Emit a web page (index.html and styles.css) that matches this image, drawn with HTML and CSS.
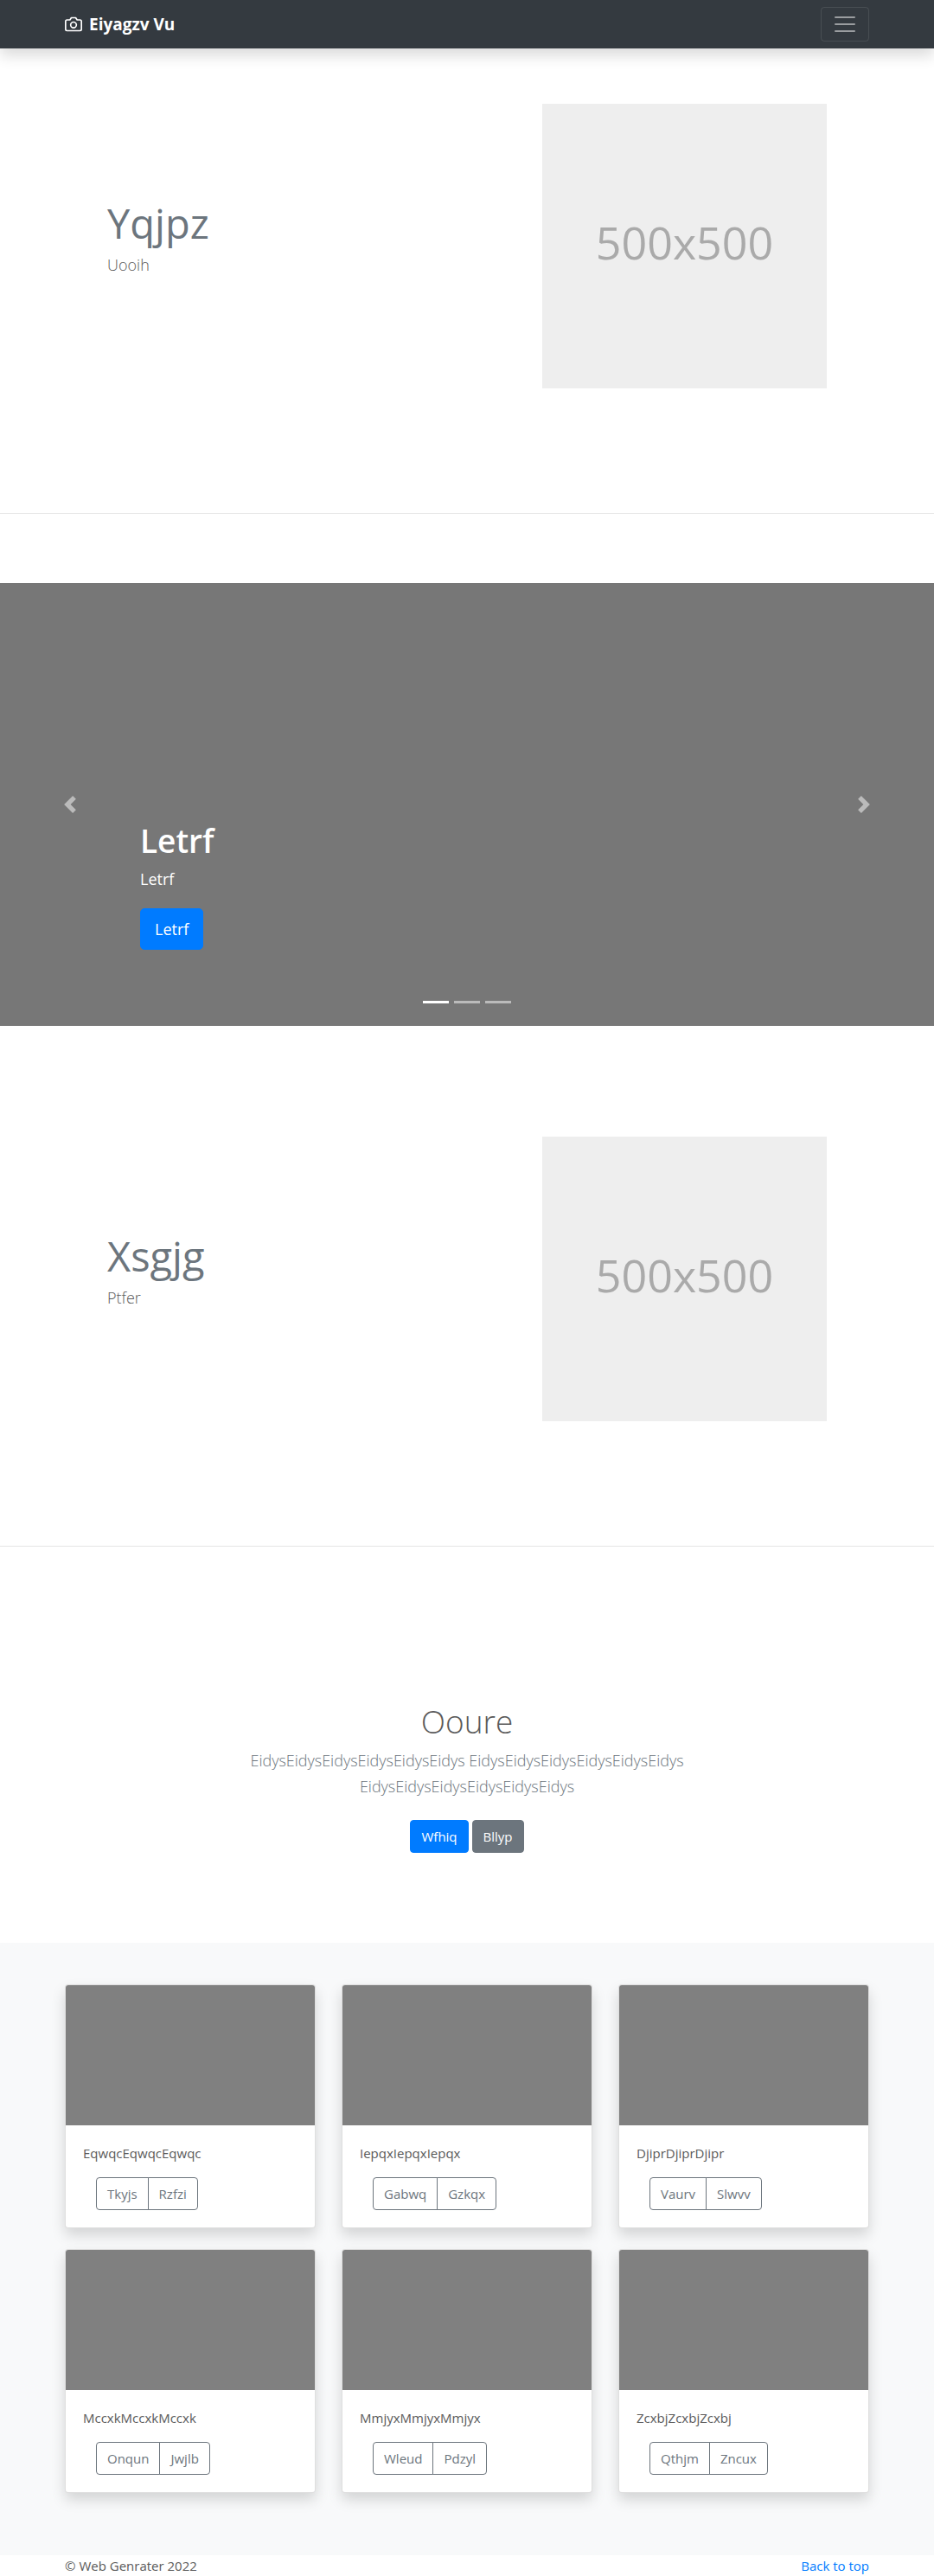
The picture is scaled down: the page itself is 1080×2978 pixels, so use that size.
FILE: index.html
```html
<!DOCTYPE html>
<html lang="en">
<head>
  <meta charset="utf-8">
  <meta name="viewport" content="width=device-width, initial-scale=1">
  <title>Eiyagzv Vu</title>
  <link rel="stylesheet" href="styles.css">
</head>
<body>
  <header class="navbar" id="top">
    <div class="container navbar-inner">
      <a class="brand" href="#">
        <svg class="brand-icon" viewBox="0 0 24 24" fill="none" stroke="currentColor" stroke-width="2" stroke-linecap="round" stroke-linejoin="round" aria-hidden="true">
          <path d="M23 19a2 2 0 0 1-2 2H3a2 2 0 0 1-2-2V8a2 2 0 0 1 2-2h4l2-3h6l2 3h4a2 2 0 0 1 2 2z"/>
          <circle cx="12" cy="13" r="4"/>
        </svg>
        <span>Eiyagzv Vu</span>
      </a>
      <button class="toggler" type="button" aria-label="Toggle navigation">
        <svg class="toggler-icon" viewBox="0 0 30 30" stroke="currentColor" stroke-width="2" stroke-linecap="round" aria-hidden="true">
          <path d="M4 7h22M4 15h22M4 23h22"/>
        </svg>
      </button>
    </div>
  </header>

  <main>
    <section class="container">
      <div class="feature">
        <div class="feature-text">
          <h2 class="feature-title">Yqjpz</h2>
          <p class="lead">Uooih</p>
        </div>
        <div class="placeholder">500x500</div>
      </div>
    </section>
    <hr class="divider">

    <section class="carousel" aria-label="Carousel">
      <div class="carousel-caption">
        <h1 class="carousel-title">Letrf</h1>
        <p class="carousel-text">Letrf</p>
        <a class="btn btn-primary btn-large" href="#">Letrf</a>
      </div>
      <button class="carousel-control carousel-prev" type="button" aria-label="Previous">
        <svg class="carousel-icon" viewBox="0 0 8 8" fill="#fff" aria-hidden="true"><path d="M5.25 0l-4 4 4 4 1.5-1.5L4.25 4l2.5-2.5L5.25 0z"/></svg>
      </button>
      <button class="carousel-control carousel-next" type="button" aria-label="Next">
        <svg class="carousel-icon" viewBox="0 0 8 8" fill="#fff" aria-hidden="true"><path d="M2.75 0l-1.5 1.5L3.75 4l-2.5 2.5L2.75 8l4-4-4-4z"/></svg>
      </button>
      <div class="indicators">
        <button class="indicator active" type="button" aria-label="Slide 1"></button>
        <button class="indicator" type="button" aria-label="Slide 2"></button>
        <button class="indicator" type="button" aria-label="Slide 3"></button>
      </div>
    </section>

    <section class="container">
      <div class="feature">
        <div class="feature-text">
          <h2 class="feature-title">Xsgjg</h2>
          <p class="lead">Ptfer</p>
        </div>
        <div class="placeholder">500x500</div>
      </div>
    </section>
    <hr class="divider">

    <section class="intro">
      <h1 class="intro-title">Ooure</h1>
      <p class="lead intro-lead">EidysEidysEidysEidysEidysEidys EidysEidysEidysEidysEidysEidys EidysEidysEidysEidysEidysEidys</p>
      <div class="intro-actions">
        <a class="btn btn-primary" href="#">Wfhiq</a>
        <a class="btn btn-secondary" href="#">Bllyp</a>
      </div>
    </section>

    <section class="album">
      <div class="container album-grid">
        <article class="card">
          <div class="card-image"></div>
          <div class="card-body">
            <p class="card-text">EqwqcEqwqcEqwqc</p>
            <div class="btn-group">
              <button class="btn btn-outline" type="button">Tkyjs</button>
              <button class="btn btn-outline" type="button">Rzfzi</button>
            </div>
          </div>
        </article>
        <article class="card">
          <div class="card-image"></div>
          <div class="card-body">
            <p class="card-text">IepqxIepqxIepqx</p>
            <div class="btn-group">
              <button class="btn btn-outline" type="button">Gabwq</button>
              <button class="btn btn-outline" type="button">Gzkqx</button>
            </div>
          </div>
        </article>
        <article class="card">
          <div class="card-image"></div>
          <div class="card-body">
            <p class="card-text">DjiprDjiprDjipr</p>
            <div class="btn-group">
              <button class="btn btn-outline" type="button">Vaurv</button>
              <button class="btn btn-outline" type="button">Slwvv</button>
            </div>
          </div>
        </article>
        <article class="card">
          <div class="card-image"></div>
          <div class="card-body">
            <p class="card-text">MccxkMccxkMccxk</p>
            <div class="btn-group">
              <button class="btn btn-outline" type="button">Onqun</button>
              <button class="btn btn-outline" type="button">Jwjlb</button>
            </div>
          </div>
        </article>
        <article class="card">
          <div class="card-image"></div>
          <div class="card-body">
            <p class="card-text">MmjyxMmjyxMmjyx</p>
            <div class="btn-group">
              <button class="btn btn-outline" type="button">Wleud</button>
              <button class="btn btn-outline" type="button">Pdzyl</button>
            </div>
          </div>
        </article>
        <article class="card">
          <div class="card-image"></div>
          <div class="card-body">
            <p class="card-text">ZcxbjZcxbjZcxbj</p>
            <div class="btn-group">
              <button class="btn btn-outline" type="button">Qthjm</button>
              <button class="btn btn-outline" type="button">Zncux</button>
            </div>
          </div>
        </article>
      </div>
    </section>
  </main>

  <footer class="container footer">
    <span>© Web Genrater 2022</span>
    <a class="footer-link" href="#top">Back to top</a>
  </footer>
</body>
</html>
```
FILE: styles.css
```css
*,
*::before,
*::after {
  box-sizing: border-box;
}

body {
  margin: 0;
  background: #fff;
  color: #5a5a5a;
  font-family: "Open Sans", "Noto Sans", sans-serif;
  font-size: 15px;
  line-height: 24px;
}

h1,
h2,
p {
  margin: 0;
}

a {
  text-decoration: none;
}

button {
  font-family: inherit;
  cursor: pointer;
}

.container {
  width: 100%;
  max-width: 960px;
  margin: 0 auto;
  padding: 0 15px;
}

/* Navigation bar */
.navbar {
  position: relative;
  padding: 8px 0;
  background: #343a40;
  box-shadow: 0 8px 16px rgba(0, 0, 0, 0.15);
}

.navbar-inner {
  display: flex;
  align-items: center;
  justify-content: space-between;
}

.brand {
  display: flex;
  align-items: center;
  gap: 8px;
  color: #fff;
  font-size: 19px;
  font-weight: 700;
  line-height: 30px;
}

.brand-icon {
  width: 20px;
  height: 20px;
}

.toggler {
  display: block;
  padding: 4px 12px;
  border: 1px solid rgba(255, 255, 255, 0.1);
  border-radius: 4px;
  background: transparent;
  color: rgba(255, 255, 255, 0.5);
}

.toggler-icon {
  display: block;
  width: 30px;
  height: 30px;
}

/* Feature rows */
.feature {
  display: grid;
  grid-template-columns: 473fr 329fr;
  gap: 30px;
  align-items: center;
  padding: 64px 49px;
}

.feature-text {
  display: flex;
  flex-direction: column;
  gap: 8px;
  padding-bottom: 16px;
}

.feature-title {
  color: #6c757d;
  font-size: 47px;
  font-weight: 400;
  line-height: 50px;
}

.lead {
  font-size: 18px;
  font-weight: 300;
  line-height: 30px;
}

.placeholder {
  display: flex;
  align-items: center;
  justify-content: center;
  aspect-ratio: 1;
  padding-bottom: 10px;
  background: #eee;
  color: #aaa;
  font-size: 52px;
  line-height: 56px;
}

.divider {
  margin: 80px 0;
  border: 0;
  border-top: 1px solid #e5e5e5;
}

/* Carousel */
.carousel {
  position: relative;
  display: flex;
  align-items: flex-end;
  height: 512px;
  margin-bottom: 64px;
  padding: 0 15% 88px;
  background: #777;
}

.carousel-caption {
  display: flex;
  flex-direction: column;
  align-items: flex-start;
  color: #fff;
}

.carousel-title {
  margin-bottom: 4px;
  font-size: 37px;
  font-weight: 600;
  line-height: 52px;
}

.carousel-text {
  margin-bottom: 20px;
  font-size: 18px;
  line-height: 28px;
}

.carousel-control {
  position: absolute;
  top: 0;
  bottom: 0;
  display: flex;
  align-items: center;
  justify-content: center;
  width: 15%;
  padding: 0;
  border: 0;
  background: none;
  opacity: 0.5;
}

.carousel-prev {
  left: 0;
}

.carousel-next {
  right: 0;
}

.carousel-icon {
  width: 20px;
  height: 20px;
}

.indicators {
  position: absolute;
  right: 15%;
  bottom: 16px;
  left: 15%;
  display: flex;
  justify-content: center;
  gap: 6px;
}

.indicator {
  width: 30px;
  height: 23px;
  padding: 0;
  border: 0 solid transparent;
  border-width: 10px 0;
  background: #fff;
  background-clip: padding-box;
  opacity: 0.5;
}

.indicator.active {
  opacity: 1;
}

/* Buttons */
.btn {
  display: inline-block;
  padding: 6px 12px;
  border: 1px solid transparent;
  border-radius: 4px;
  font-size: 15px;
  line-height: 24px;
}

.btn-primary {
  border-color: #007bff;
  background: #007bff;
  color: #fff;
}

.btn-secondary {
  border-color: #6c757d;
  background: #6c757d;
  color: #fff;
}

.btn-outline {
  border-color: #6c757d;
  background: transparent;
  color: #6c757d;
}

.btn-large {
  padding: 8px 16px;
  border-radius: 5px;
  font-size: 18px;
  line-height: 30px;
}

.btn-group {
  display: flex;
  padding: 0 15px;
}

.btn-group .btn:first-child {
  border-radius: 4px 0 0 4px;
}

.btn-group .btn:last-child {
  margin-left: -1px;
  border-radius: 0 4px 4px 0;
}

/* Introduction */
.intro {
  max-width: 640px;
  margin: 0 auto;
  padding: 96px 15px;
  text-align: center;
}

.intro-title {
  margin-bottom: 4px;
  font-size: 37px;
  font-weight: 300;
  line-height: 52px;
}

.intro-lead {
  margin-bottom: 16px;
  color: #6c757d;
}

.intro-actions {
  display: flex;
  justify-content: center;
  gap: 4px;
  padding: 8px 0;
}

/* Album */
.album {
  padding: 48px 0 72px;
  background: #f8f9fa;
}

.album-grid {
  display: grid;
  grid-template-columns: repeat(3, 1fr);
  gap: 24px 30px;
}

.card {
  border: 1px solid rgba(0, 0, 0, 0.125);
  border-radius: 4px;
  background: #fff;
  box-shadow: 0 8px 16px rgba(0, 0, 0, 0.15);
}

.card-image {
  height: 162px;
  border-radius: 3px 3px 0 0;
  background: #808080;
}

.card-body {
  padding: 20px;
}

.card-text {
  margin-bottom: 16px;
}

/* Footer */
.footer {
  display: flex;
  justify-content: space-between;
}

.footer-link {
  color: #007bff;
}
```
